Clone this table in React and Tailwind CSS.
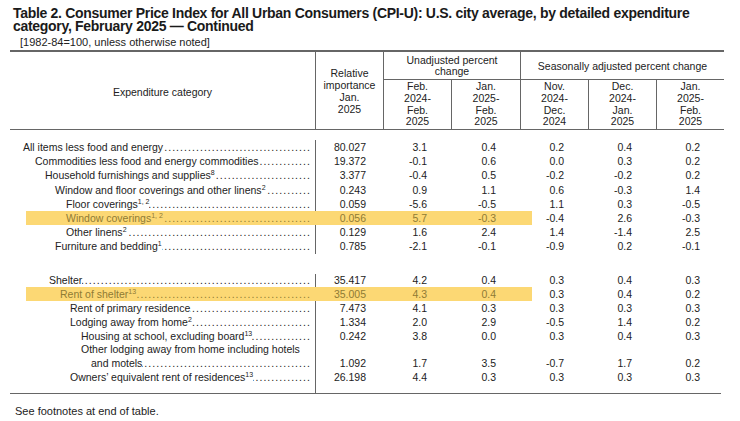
import React from 'react';

const font = { fontFamily: '"Liberation Sans", Arial, sans-serif' };

const blockOne = [
  { label: 'All items less food and energy', indent: 'pl-[13px]', vals: ['80.027', '3.1', '0.4', '0.2', '0.4', '0.2'] },
  { label: 'Commodities less food and energy commodities', indent: 'pl-[25px]', vals: ['19.372', '-0.1', '0.6', '0.0', '0.3', '0.2'] },
  { label: 'Household furnishings and supplies', sup: '8', indent: 'pl-[35px]', vals: ['3.377', '-0.4', '0.5', '-0.2', '-0.2', '0.2'] },
  { label: 'Window and floor coverings and other linens', sup: '2', indent: 'pl-[45px]', vals: ['0.243', '0.9', '1.1', '0.6', '-0.3', '1.4'] },
  { label: 'Floor coverings', sup: '1, 2', indent: 'pl-[56px]', vals: ['0.059', '-5.6', '-0.5', '1.1', '0.3', '-0.5'] },
  { label: 'Window coverings', sup: '1, 2', indent: 'pl-[56px]', hl: true, vals: ['0.056', '5.7', '-0.3', '-0.4', '2.6', '-0.3'] },
  { label: 'Other linens', sup: '2', indent: 'pl-[56px]', vals: ['0.129', '1.6', '2.4', '1.4', '-1.4', '2.5'] },
  { label: 'Furniture and bedding', sup: '1', indent: 'pl-[45px]', vals: ['0.785', '-2.1', '-0.1', '-0.9', '0.2', '-0.1'] },
];

const blockTwo = [
  { label: 'Shelter', indent: 'pl-[39px]', vals: ['35.417', '4.2', '0.4', '0.3', '0.4', '0.3'] },
  { label: 'Rent of shelter', sup: '13', indent: 'pl-[50px]', hl: true, vals: ['35.005', '4.3', '0.4', '0.3', '0.4', '0.2'] },
  { label: 'Rent of primary residence', indent: 'pl-[60px]', vals: ['7.473', '4.1', '0.3', '0.3', '0.3', '0.3'] },
  { label: 'Lodging away from home', sup: '2', indent: 'pl-[60px]', vals: ['1.334', '2.0', '2.9', '-0.5', '1.4', '0.2'] },
  { label: 'Housing at school, excluding board', sup: '13', indent: 'pl-[71px]', vals: ['0.242', '3.8', '0.0', '0.3', '0.4', '0.3'] },
  { label: 'Other lodging away from home including hotels', cont: 'and motels', indent: 'pl-[71px]', vals: ['1.092', '1.7', '3.5', '-0.7', '1.7', '0.2'] },
  { label: 'Owners’ equivalent rent of residences', sup: '13', indent: 'pl-[60px]', vals: ['26.198', '4.4', '0.3', '0.3', '0.3', '0.3'] },
];

// widths + right padding of the six number columns
const numCols = [
  'w-[68px] pr-[18px]',
  'w-[68px] pr-[25px]',
  'w-[69px] pr-[25px]',
  'w-[68px] pr-[25px]',
  'w-[68px] pr-[25px]',
  'w-[67px] pr-[24px]',
];

const Leader = () => (
  <span dir="rtl" className="flex-1 min-w-0 overflow-hidden whitespace-nowrap tracking-[1.05px]">
    {'.'.repeat(160)}
  </span>
);

const Label = ({ text, sup }) => (
  <span className="whitespace-nowrap">
    {text}
    {sup && <sup className="text-[7px] relative -top-[4px]">{sup}</sup>}
  </span>
);

const Row = ({ row, h }) => {
  const txt = row.hl ? 'text-[#8f7b34]' : 'text-[#222]';
  return (
    <div className={`relative flex items-end ${row.cont ? 'h-auto' : h}`}>
      {row.hl && <div className="absolute left-[16px] top-0 bottom-0 w-[506px] bg-[#fcd874]" />}
      <div className={`relative w-[306px] shrink-0 border-r pr-[4px] ${row.indent} ${row.hl ? 'border-[#fcd874]' : 'border-[#666]'}`}>
        {row.cont ? (
          <>
            <div className={`${h} flex items-center ${txt}`}>
              <Label text={row.label} />
            </div>
            <div className={`${h} flex items-center pl-[10px] ${txt}`}>
              <Label text={row.cont} />
              <Leader />
            </div>
          </>
        ) : (
          <div className={`${h} flex items-center ${txt}`}>
            <Label text={row.label} sup={row.sup} />
            <Leader />
          </div>
        )}
      </div>
      {row.vals.map((v, i) => (
        <div
          key={i}
          className={`relative ${h} flex items-center justify-end shrink-0 ${numCols[i]} ${row.hl && i < 3 ? 'text-[#8f7b34]' : 'text-[#222]'}`}
        >
          {v}
        </div>
      ))}
    </div>
  );
};

const SubHead = ({ lines, w, last }) => (
  <div className={`${w} shrink-0 flex flex-col items-center justify-center leading-[11.7px] ${last ? '' : 'border-r border-[#666]'}`}>
    {lines.map((l) => (
      <span key={l}>{l}</span>
    ))}
  </div>
);

export default function App() {
  return (
    <div style={font} className="w-[740px] h-[421px] bg-white text-[#222] overflow-hidden">
      {/* Title */}
      <div className="pl-[13px] pt-[7px] text-[14px] font-bold leading-[13px] tracking-[-0.3px] whitespace-nowrap text-[#1a1a1a]">
        <div>Table 2. Consumer Price Index for All Urban Consumers (CPI-U): U.S. city average, by detailed expenditure</div>
        <div>category, February 2025 — Continued</div>
      </div>
      <div className="pl-[20px] pt-[3px] text-[11px] leading-[13px]">[1982-84=100, unless otherwise noted]</div>

      {/* Table */}
      <div className="ml-[10px] mt-[1px] w-[714px] text-[10.5px] leading-[12px]">
        {/* Header */}
        <div className="flex h-[80px] border-t-2 border-b border-[#666]">
          <div className="w-[306px] shrink-0 border-r border-[#666] flex items-center justify-center pt-[2px]">
            Expenditure category
          </div>
          <div className="w-[68px] shrink-0 border-r border-[#666] flex flex-col items-center justify-center">
            <span>Relative</span>
            <span>importance</span>
            <span>Jan.</span>
            <span>2025</span>
          </div>
          <div className="flex-1 flex flex-col">
            <div className="h-[28px] flex border-b border-[#666]">
              <div className="w-[137px] shrink-0 border-r border-[#666] flex flex-col items-center justify-center leading-[11px]">
                <span>Unadjusted percent</span>
                <span>change</span>
              </div>
              <div className="flex-1 flex items-center justify-center">Seasonally adjusted percent change</div>
            </div>
            <div className="flex-1 flex">
              <SubHead w="w-[68px]" lines={['Feb.', '2024-', 'Feb.', '2025']} />
              <SubHead w="w-[69px]" lines={['Jan.', '2025-', 'Feb.', '2025']} />
              <SubHead w="w-[68px]" lines={['Nov.', '2024-', 'Dec.', '2024']} />
              <SubHead w="w-[68px]" lines={['Dec.', '2024-', 'Jan.', '2025']} />
              <SubHead w="w-[67px]" lines={['Jan.', '2025-', 'Feb.', '2025']} last />
            </div>
          </div>
        </div>

        {/* Body */}
        <div className="h-[10px]" />
        {blockOne.map((r) => (
          <Row key={r.label} row={r} h="h-[14.2px]" />
        ))}
        <div className="h-[20px]" />
        {blockTwo.map((r) => (
          <Row key={r.label} row={r} h="h-[13.8px]" />
        ))}
        <div className="flex h-[10px] w-[711px] border-b border-[#666]">
          <div className="w-[306px] border-r border-[#666]" />
        </div>
      </div>

      <div className="pl-[15px] pt-[11px] text-[11px] leading-[13px]">See footnotes at end of table.</div>
    </div>
  );
}
